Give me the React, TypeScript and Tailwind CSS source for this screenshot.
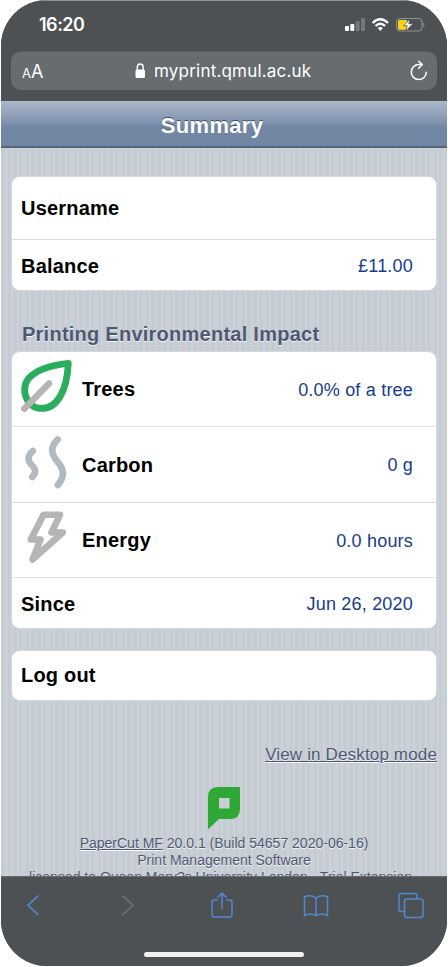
import type { ReactNode } from "react";

interface RowProps {
  label: string;
  value?: string;
  icon?: ReactNode;
  className?: string;
}

function Row({ label, value, icon, className = "" }: RowProps) {
  return (
    <div className={`flex items-center pl-[9px] pr-[23px] ${className}`}>
      {icon && <div className="w-[61px] shrink-0 pb-[6px]">{icon}</div>}
      <span className="text-[20px] leading-6 font-bold text-black tracking-[0.2px]">
        {label}
      </span>
      {value && (
        <span className="ml-auto pt-px text-[18px] leading-6 tracking-[0.2px] text-[#163c8c]">
          {value}
        </span>
      )}
    </div>
  );
}

function Card({ children, className = "" }: { children: ReactNode; className?: string }) {
  return (
    <section
      className={`mx-[10px] overflow-hidden rounded-[9px] border border-[#d6d8da] bg-white ${className}`}
    >
      {children}
    </section>
  );
}

function LeafIcon() {
  return (
    <svg width="54" height="54" viewBox="0 0 54 54" fill="none" className="block">
      <path
        d="M47.300 4.300C31 6 15 11 7.500 19.500C-0.500 30 5 47.500 18 49.300C37 51.500 46 30 47.300 4.300Z"
        stroke="#2aad5c"
        strokeWidth="6.800"
        strokeLinejoin="round"
      />
      <path d="M3.300 49.700L28 24.500" stroke="#b5b5b4" strokeWidth="6.600" strokeLinecap="round" />
    </svg>
  );
}

function CarbonIcon() {
  return (
    <svg
      width="54"
      height="54"
      viewBox="0 0 54 54"
      fill="none"
      stroke="#b2bac0"
      strokeWidth="6.600"
      strokeLinecap="round"
      className="block"
    >
      <path d="M11.800 16C6.300 21 6.300 24.500 9.800 29C14.800 34 15.800 37 11.300 42" />
      <path d="M36.800 4.500C29.800 11 29.800 17 33.800 23L39.300 30.500C43.800 37 42.800 43 36.800 50" />
    </svg>
  );
}

function EnergyIcon() {
  return (
    <svg width="54" height="54" viewBox="0 0 54 54" fill="none" className="block">
      <path
        d="M22.500 4.800H39L30.500 22.500H41.800L11.500 49.500L19.500 29.500H9.800Z"
        stroke="#b5b5b4"
        strokeWidth="6.600"
        strokeLinejoin="round"
      />
    </svg>
  );
}

function StatusIcons() {
  return (
    <svg width="82" height="16" viewBox="0 0 82 16" className="block">
      <rect x="0" y="9" width="4" height="5" rx="1" fill="#fff" />
      <rect x="5.300" y="7" width="4" height="7" rx="1" fill="#fff" />
      <rect x="10.700" y="4" width="4" height="10" rx="1" fill="#74787a" />
      <rect x="16" y="1" width="4" height="13" rx="1" fill="#74787a" />
      <g fill="none" stroke="#fff" strokeWidth="2.400">
        <path d="M27.600 6Q35.300 -1.600 43 6" />
        <path d="M30.500 9Q35.300 4.400 40.100 9" />
      </g>
      <path d="M32.700 11Q35.300 9 37.900 11L35.300 14Z" fill="#fff" />
      <rect x="51.500" y="1.500" width="25.500" height="12.500" rx="3.500" fill="none" stroke="#92969a" />
      <path d="M54.500 3H62V12.700H54.500Q53 12.700 53 11.200V4.500Q53 3 54.500 3Z" fill="#fcd116" />
      <path d="M78.300 5.200Q80.500 7.700 78.300 10.200Z" fill="#92969a" />
      <path
        d="M65.200 1.800L58.500 8.700H62.200L60.500 14.200L68 6.700H63.800Z"
        fill="#fff"
        stroke="#4d5153"
        strokeWidth="0.800"
      />
    </svg>
  );
}

function BrowserHeader() {
  return (
    <div className="h-[101px] shrink-0 border-t border-[#8d9494] bg-[#4d5153]">
      <div className="flex h-[50px] items-center justify-between pl-[38px] pr-[20px]">
        <span className="pb-[3px] font-[Inter] text-[18px] leading-5 font-semibold tracking-[-0.5px] text-white">
          16:20
        </span>
        <div className="pb-[3px]">
          <StatusIcons />
        </div>
      </div>
      <div className="mx-[10px] flex h-[39px] items-center rounded-[10px] border-t border-[#5c6164] bg-[#676c6f] pl-[11px] pr-[9px] font-[Inter] text-white">
        <div className="flex w-[113px] items-baseline pt-[2px] leading-5">
          <span className="text-[13px]">A</span>
          <span className="text-[18px]">A</span>
        </div>
        <svg width="11" height="16" viewBox="0 0 11 16" className="mr-[8px]">
          <rect x="0.500" y="6.500" width="9.500" height="8.500" rx="1.500" fill="#fff" />
          <path d="M2.300 7V4.200Q2.300 1 5.250 1T8.200 4.200V7" fill="none" stroke="#fff" strokeWidth="1.400" />
        </svg>
        <span className="text-[17px] leading-5 tracking-[0.2px]">myprint.qmul.ac.uk</span>
        <svg
          width="18"
          height="22"
          viewBox="0 0 18 22"
          fill="none"
          stroke="#fff"
          strokeWidth="1.500"
          strokeLinecap="round"
          strokeLinejoin="round"
          className="ml-auto"
        >
          <path d="M16.300 12.200A7.500 7.500 0 1 1 8.800 4.600H12" />
          <path d="M8.700 1.300L12.300 4.600L8.700 8.300" />
        </svg>
      </div>
    </div>
  );
}

function BrowserToolbar() {
  return (
    <div className="h-[90px] shrink-0 border-t border-[#666a6d] bg-[#4d5153]">
      <div className="flex h-[75px] items-start justify-between pl-[24px] pr-[22px] pt-[13px] text-[#5088d0]">
        <svg width="18" height="30" viewBox="0 0 18 30" fill="none" stroke="currentColor" strokeWidth="1.700">
          <path d="M13.300 5.500L3 15.300L13.300 25" />
        </svg>
        <svg width="18" height="30" viewBox="0 0 18 30" fill="none" stroke="#6e7275" strokeWidth="1.700" className="ml-[8px]">
          <path d="M2.500 5.500L13 15.300L2.500 25" />
        </svg>
        <svg width="24" height="30" viewBox="0 0 24 30" fill="none" stroke="currentColor" strokeWidth="1.500" className="ml-[4px]">
          <path d="M8 10H4.500Q2 10 2 12.500V24.500Q2 27 4.500 27H19.500Q22 27 22 24.500V12.500Q22 10 19.500 10H16" />
          <path d="M12 19V3M7.500 7.500L12 3L16.500 7.500" />
        </svg>
        <svg width="26" height="30" viewBox="0 0 26 30" fill="none" stroke="currentColor" strokeWidth="1.500">
          <path d="M13 8Q7 4 1.500 7V25.500Q7 22.500 13 25.500Q19 22.500 24.500 25.500V7Q19 4 13 8V25.500" />
        </svg>
        <svg width="28" height="30" viewBox="0 0 28 30" fill="none" stroke="currentColor" strokeWidth="1.500">
          <path d="M7.500 21.500H4.500Q2 21.500 2 19V6Q2 3.500 4.500 3.500H17.500Q20 3.500 20 6V9" />
          <rect x="7.500" y="9" width="18.500" height="18.500" rx="2.500" />
        </svg>
      </div>
      <div className="mx-auto h-[5px] w-[160px] rounded-full bg-[#f1f0ef]" />
    </div>
  );
}

function PaperCutLogo() {
  return (
    <svg width="32" height="43" viewBox="0 0 32 43" className="mx-auto block">
      <path
        d="M10 0H32V22Q32 32 22 32H11L0 42.500V10Q0 0 10 0ZM11 11V21.500H21.500V11Z"
        fill="#30a836"
        fillRule="evenodd"
      />
    </svg>
  );
}

export default function App() {
  return (
    <main className="h-[967px] w-[448px] overflow-hidden bg-white px-px font-['Liberation_Sans',Arial,sans-serif]">
      <div className="flex h-[966px] flex-col overflow-hidden rounded-[46px] bg-[#4d5153]">
        <BrowserHeader />
        <header className="flex h-[47px] shrink-0 items-center justify-center border-b-2 border-[#53657f] bg-[linear-gradient(#aeb9c9_0%,#7b8ead_52%,#7187a6_53%,#7187a2_100%)] pr-[24px] pt-[5px]">
          <h1 className="text-[22px] leading-7 font-bold tracking-[0.3px] text-white [text-shadow:0_-1px_0_#3e4e65]">
            Summary
          </h1>
        </header>

        <div className="min-h-0 flex-1 overflow-hidden bg-[repeating-linear-gradient(90deg,#c5ccd4_0px,#c5ccd4_4px,#cbd2d8_4px,#cbd2d8_6px)] pt-[28px] text-[#4f5872]">
          <Card>
            <Row label="Username" className="h-[63px] border-b border-[#d9d9d9]" />
            <Row label="Balance" value="£11.00" className="h-[50px] pt-px" />
          </Card>

          <h2 className="mt-[31px] mb-[5px] pl-[21px] text-[20px] leading-6 font-bold tracking-[0.25px] [text-shadow:0_1px_0_#f3f5f7]">
            Printing Environmental Impact
          </h2>
          <Card>
            <Row
              label="Trees"
              value="0.0% of a tree"
              icon={<LeafIcon />}
              className="h-[75px] border-b border-[#e3e3e3]"
            />
            <Row
              label="Carbon"
              value="0 g"
              icon={<CarbonIcon />}
              className="h-[76px] border-b border-[#d9d9d9]"
            />
            <Row
              label="Energy"
              value="0.0 hours"
              icon={<EnergyIcon />}
              className="h-[75px] border-b border-[#e3e3e3]"
            />
            <Row label="Since" value="Jun 26, 2020" className="h-[50px] pt-px" />
          </Card>

          <Card className="mt-[21px]">
            <Row label="Log out" className="h-[49px] pb-px" />
          </Card>

          <div className="mt-[42px] pr-[10px] text-right text-[17px] leading-6 tracking-[0.15px] [text-shadow:0_1px_0_#f3f5f7]">
            <span className="underline">View in Desktop mode</span>
          </div>

          <footer className="mt-[20px] text-center text-[14px] leading-[17px] whitespace-nowrap [text-shadow:0_1px_0_#f3f5f7]">
            <PaperCutLogo />
            <p className="mt-[5px]">
              <span className="underline">PaperCut MF</span> 20.0.1 (Build 54657 2020-06-16)
            </p>
            <p>Print Management Software</p>
            <p className="pr-[7px]">licensed to Queen Mary?s University London - Trial Extension</p>
          </footer>
        </div>

        <BrowserToolbar />
      </div>
    </main>
  );
}
